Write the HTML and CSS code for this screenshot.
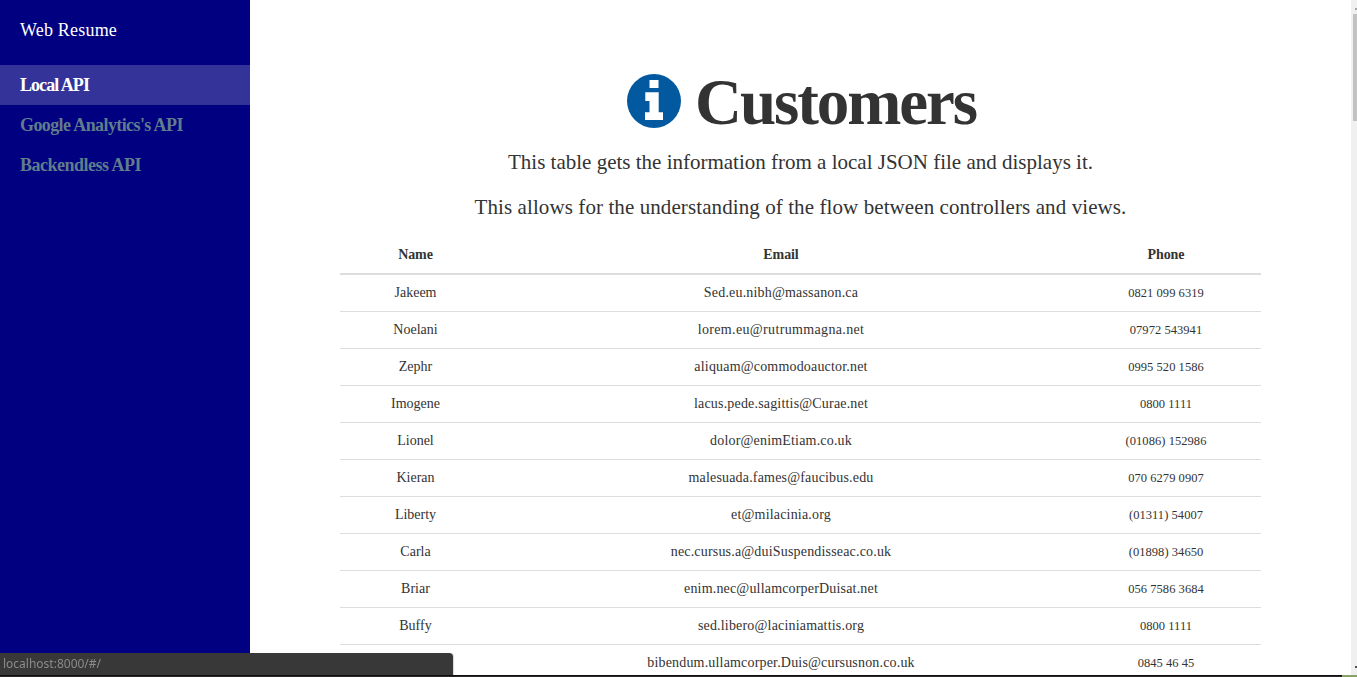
FILE: index.html
```html
<!DOCTYPE html>
<html lang="en">
<head>
<meta charset="utf-8">
<title>Web Resume</title>
<link rel="stylesheet" href="styles.css">
</head>
<body>
<div class="app">
  <nav class="sidebar">
    <a class="brand">Web Resume</a>
    <a class="link active"><span class="t-local">Local API</span></a>
    <a class="link"><span class="t-google">Google Analytics's API</span></a>
    <a class="link"><span class="t-backend">Backendless API</span></a>
  </nav>
  <main class="content">
    <h1 class="title">
      <svg class="info" viewBox="0 0 54 54"><circle cx="27" cy="27" r="27" fill="#03599f"/><path fill="#fff" d="M22.500 6h9v8h-9zM18.300 18.300H31.700V38.300H36V46H18V38.300H22.500V27H18.300z"/></svg>
      <span class="title-text">Customers</span>
    </h1>
    <p class="lead first">This table gets the information from a local JSON file and displays it.</p>
    <p class="lead second">This allows for the understanding of the flow between controllers and views.</p>
    <table class="table">
      <thead><tr><th class="c-name">Name</th><th class="c-email">Email</th><th class="c-phone">Phone</th></tr></thead>
      <tbody>
        <tr><td>Jakeem</td><td class="mail">Sed.eu.nibh@massanon.ca</td><td class="num">0821 099 6319</td></tr>
        <tr><td>Noelani</td><td class="mail wide">lorem.eu@rutrummagna.net</td><td class="num">07972 543941</td></tr>
        <tr><td>Zephr</td><td class="mail">aliquam@commodoauctor.net</td><td class="num">0995 520 1586</td></tr>
        <tr><td>Imogene</td><td class="mail">lacus.pede.sagittis@Curae.net</td><td class="num">0800 1111</td></tr>
        <tr><td>Lionel</td><td class="mail">dolor@enimEtiam.co.uk</td><td class="num">(01086) 152986</td></tr>
        <tr><td>Kieran</td><td class="mail">malesuada.fames@faucibus.edu</td><td class="num">070 6279 0907</td></tr>
        <tr><td>Liberty</td><td class="mail">et@milacinia.org</td><td class="num">(01311) 54007</td></tr>
        <tr><td>Carla</td><td class="mail">nec.cursus.a@duiSuspendisseac.co.uk</td><td class="num">(01898) 34650</td></tr>
        <tr><td>Briar</td><td class="mail">enim.nec@ullamcorperDuisat.net</td><td class="num">056 7586 3684</td></tr>
        <tr><td>Buffy</td><td class="mail">sed.libero@laciniamattis.org</td><td class="num">0800 1111</td></tr>
        <tr><td></td><td class="mail">bibendum.ullamcorper.Duis@cursusnon.co.uk</td><td class="num">0845 46 45</td></tr>
      </tbody>
    </table>
  </main>
  <div class="scrollbar"><i class="up"></i><i class="thumb"></i><i class="down"></i></div>
</div>
<div class="status">localhost:8000/#/</div>
<div class="edge"><i></i></div>
</body>
</html>
```

FILE: styles.css
```css
* { box-sizing: border-box; }
html, body { margin: 0; height: 100%; overflow: hidden; }
body { font-family: "Liberation Serif", "Times New Roman", serif; font-size: 14px; line-height: 20px; color: #333; background: #fff; }
.app { display: flex; height: 677px; overflow: hidden; }
.sidebar { width: 250px; flex: none; background: #000080; font-size: 18px; line-height: 40px; }
.brand { display: block; height: 65px; line-height: 61px; padding-left: 20px; color: #fff; letter-spacing: .2px; }
.link { display: block; height: 40px; padding-left: 20px; color: #607d8b; font-weight: bold; white-space: nowrap; }
.link.active { background: #333399; color: #fff; }
.t-local { letter-spacing: -.95px; }
.t-google { letter-spacing: -.6px; }
.t-backend { letter-spacing: -.5px; }
.content { flex: 1; padding: 0 90px; text-align: center; min-width: 0; }
.title { display: flex; justify-content: center; align-items: center; gap: 14px; margin: 66px 0 0; height: 69px; font-size: 65px; line-height: 68px; letter-spacing: -2.1px; }
.title-text { padding-top: 3px; margin-right: -2px; }
.info { width: 54px; height: 54px; }
.lead { margin: 0; font-size: 21px; line-height: 30px; white-space: nowrap; }
.first { margin-top: 12px; }
.second { margin: 15px 0; letter-spacing: .09px; }
.table { width: 921px; table-layout: fixed; border-collapse: separate; border-spacing: 0; }
.table th, .table td { height: 37px; padding: 8px 0; white-space: nowrap; border-top: 1px solid #ddd; }
.table th { height: 38px; border-top: 0; border-bottom: 2px solid #ddd; letter-spacing: -.1px; }
.table tbody tr:first-child td { border-top: 0; height: 36px; }
.c-name { width: 151px; }
.c-email { width: 580px; }
.c-phone { width: 190px; }
.table .mail { letter-spacing: .18px; }
.table .wide { letter-spacing: .35px; }
.table .num { font-size: 12.5px; letter-spacing: .05px; }
.scrollbar { width: 6px; flex: none; background: #f0f0f0; display: flex; flex-direction: column; align-items: flex-end; }
.up { width: 2px; height: 2px; margin-top: 8px; background: #a3a3a3; }
.thumb { width: 4px; height: 107px; margin-top: 4px; background: #c1c1c1; }
.down { width: 2px; height: 2px; margin-top: 545px; background: #505050; }
.status { position: fixed; left: 0; bottom: 2px; width: 453px; height: 22px; padding-left: 3px; background: #383838; color: #8b8b8b; font: 12px/21px "Noto Sans", sans-serif; border-top-right-radius: 4px; box-shadow: 0 0 1px 1px rgba(180,180,180,.5); clip-path: inset(0 -2px 0 0); }
.edge { position: fixed; left: 0; right: 0; bottom: 0; height: 2px; display: flex; justify-content: flex-end; background: linear-gradient(#101010 50%, #2a2829 50%); }
.edge i { width: 15px; background: #86a266; }
```
